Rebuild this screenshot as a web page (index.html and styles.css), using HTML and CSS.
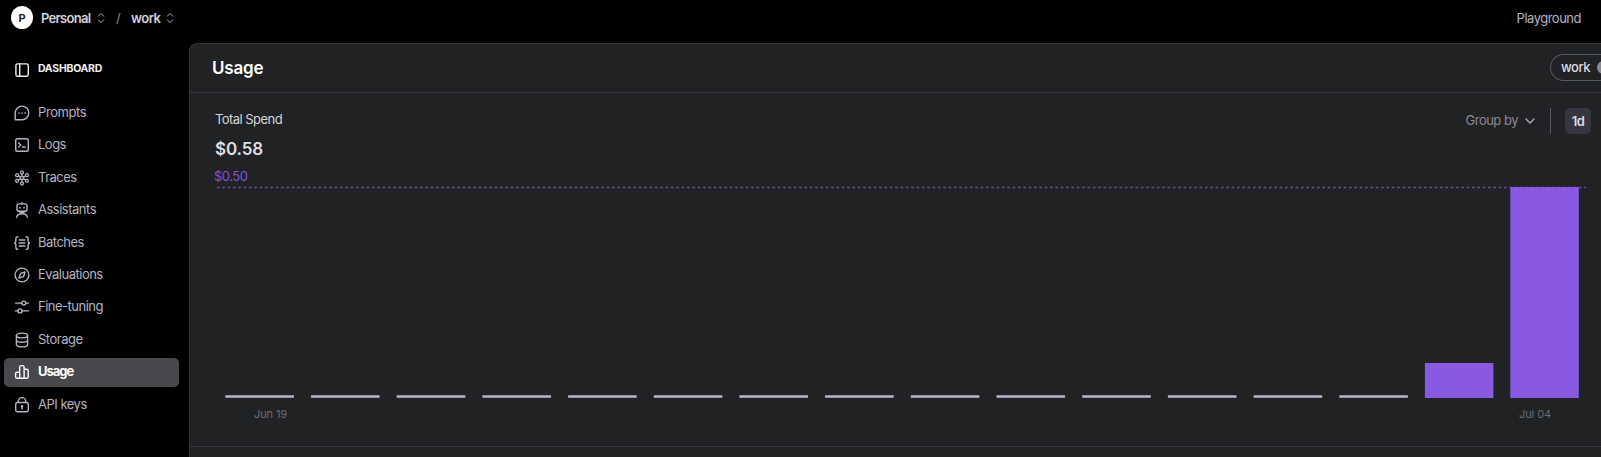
FILE: index.html
```html
<!DOCTYPE html>
<html lang="en">
<head>
<meta charset="utf-8">
<title>Usage</title>
<link rel="stylesheet" href="styles.css">
</head>
<body>
<header class="topbar">
  <span class="avatar">P</span>
  <span class="crumb personal">Personal</span>
  <svg class="updown" viewBox="0 0 8 12"><path d="M1.300 4.200 4 1.400l2.700 2.800M1.300 7.800 4 10.600l2.700-2.800"/></svg>
  <span class="slash">/</span>
  <span class="crumb work">work</span>
  <svg class="updown" viewBox="0 0 8 12"><path d="M1.300 4.200 4 1.400l2.700 2.800M1.300 7.800 4 10.600l2.700-2.800"/></svg>
  <span class="playground">Playground</span>
</header>
<div class="shell">
  <aside class="sidebar">
    <div class="heading">
      <svg class="icon" viewBox="0 0 16 16"><rect x="1.900" y="1.900" width="12.400" height="12.400" rx="1.700"/><path d="M5.700 2v12.200"/></svg>
      <span>DASHBOARD</span>
    </div>
    <nav class="nav">
      <a class="item prompts"><svg class="icon" viewBox="0 0 16 16"><path d="M1.200 14.700V8A6.800 6.800 0 1 1 8 14.700Z"/><path class="dots" d="M5 8h.01M8 8h.01M11 8h.01"/></svg><span>Prompts</span></a>
      <a class="item logs"><svg class="icon" viewBox="0 0 16 16"><rect x="1.700" y="1.700" width="12.600" height="12.600" rx="1.800"/><path d="m4.700 5.900 2 2-2 2M8.300 10h2.900"/></svg><span>Logs</span></a>
      <a class="item traces"><svg class="icon" viewBox="0 0 16 16"><circle cx="8" cy="8" r="1.700"/><circle cx="8" cy="2.400" r="1.500"/><circle cx="8" cy="13.600" r="1.500"/><circle cx="3.100" cy="5.200" r="1.500"/><circle cx="12.900" cy="5.200" r="1.500"/><circle cx="3.100" cy="10.800" r="1.500"/><circle cx="12.900" cy="10.800" r="1.500"/><path d="M8 4v2.400M8 9.600V12M4.400 6l2.200 1.200M9.400 8.800l2.200 1.200M11.600 6 9.400 7.200M6.600 8.800 4.400 10"/></svg><span>Traces</span></a>
      <a class="item assistants"><svg class="icon" viewBox="0 0 16 16"><rect x="3" y="1.900" width="10" height="7.400" rx="2"/><path d="M8 .5v1.300M2.700 15.200c.2-2 2-3.500 5.300-3.500s5.100 1.500 5.300 3.500M4.900 9.500c1.800 1.300 4.400 1.300 6.200 0"/><path class="dots" d="M6 5.700h.01M10 5.700h.01"/></svg><span>Assistants</span></a>
      <a class="item batches"><svg class="icon" viewBox="0 0 16 16"><path d="M3.800 1.700c-1.400 0-1.900.6-1.900 1.900v2.500c0 1-.4 1.500-1.300 1.900.9.400 1.300.9 1.300 1.900v2.500c0 1.300.5 1.900 1.900 1.900M12.200 1.700c1.400 0 1.900.6 1.900 1.900v2.500c0 1 .4 1.500 1.300 1.900-.9.400-1.300.9-1.300 1.900v2.500c0 1.300-.5 1.900-1.900 1.900M5.200 5h5.600M5.200 8h5.600M5.200 11h5.600"/></svg><span>Batches</span></a>
      <a class="item evaluations"><svg class="icon" viewBox="0 0 16 16"><circle cx="8" cy="8" r="6.900"/><path d="m6.600 6.300 4.400-1.300-1.500 4.700L5 11Z"/></svg><span>Evaluations</span></a>
      <a class="item finetuning"><svg class="icon" viewBox="0 0 16 16"><circle cx="9.800" cy="4.100" r="2"/><circle cx="6" cy="11.900" r="2"/><path d="M1.500 4.100h6.300M11.800 4.100h2.700M1.500 11.900H4M8 11.900h6.500"/></svg><span>Fine-tuning</span></a>
      <a class="item storage"><svg class="icon" viewBox="0 0 16 16"><ellipse cx="8" cy="3.500" rx="5.600" ry="2.400"/><path d="M2.400 3.500v9c0 1.400 2.500 2.400 5.600 2.400s5.600-1 5.600-2.400v-9M2.400 8c0 1.400 2.500 2.300 5.600 2.300s5.600-.9 5.600-2.300"/></svg><span>Storage</span></a>
      <a class="item usage active"><svg class="icon" viewBox="0 0 16 16"><path d="M5.700 14.300H3.200c-1 0-1.600-.6-1.600-1.600V9.800c0-1 .6-1.600 1.600-1.600h2.500M5.700 14.300V3.200c0-1 .6-1.600 1.600-1.600h1.200c1 0 1.600.6 1.600 1.600v11.100ZM10.100 5.300h2.500c1 0 1.600.6 1.600 1.600v5.800c0 1-.6 1.600-1.600 1.600h-2.500"/></svg><span>Usage</span></a>
      <a class="item keys"><svg class="icon" viewBox="0 0 16 16"><rect x="1.700" y="5.500" width="12.600" height="9.300" rx="1.700"/><path d="M4.300 5.400V4.300a3.700 3.700 0 0 1 7.400 0v1.100M8 10v2"/><circle class="solid" cx="8" cy="9.300" r="1.200"/></svg><span>API keys</span></a>
    </nav>
  </aside>
  <main class="panel">
    <div class="panel-head">
      <h1>Usage</h1>
      <div class="pill"><span>work</span><i></i></div>
    </div>
    <section class="spend">
      <div class="summary">
        <div>
          <div class="label">Total Spend</div>
          <div class="amount">$0.58</div>
        </div>
        <div class="controls">
          <span class="group">Group by</span>
          <svg class="chevron" viewBox="0 0 10 6"><path d="m1 1 4 4 4-4"/></svg>
          <span class="divider"></span>
          <span class="range">1d</span>
        </div>
      </div>
      <div class="limit">$0.50</div>
      <svg class="chart" viewBox="0 0 1412 214">
        <g class="empty">
          <path d="M36.300 211.500h68.600M122 211.500h68.600M207.700 211.500h68.600M293.400 211.500H362M379.100 211.500h68.600M464.800 211.500h68.600M550.400 211.500H619M636.100 211.500h68.600M721.800 211.500h68.600M807.500 211.500h68.600M893.200 211.500h68.600M978.900 211.500h68.600M1064.600 211.500h68.600M1150.300 211.500h68.600"/>
        </g>
        <rect class="bar" x="1235.900" y="178" width="68.500" height="35"/>
        <path class="threshold" d="M28 2.500h1369"/>
        <rect class="bar" x="1321.300" y="2" width="68.500" height="211"/>
      </svg>
      <div class="dates"><span>Jun 19</span><span>Jul 04</span></div>
    </section>
  </main>
</div>
</body>
</html>
```
FILE: styles.css
```css
* { box-sizing: border-box; }
body {
  margin: 0;
  width: 1601px;
  height: 457px;
  overflow: hidden;
  background: #000;
  color: #b5b4c0;
  font: 13px/16px Inter, "Liberation Sans", sans-serif;
  letter-spacing: -0.5px;
}
svg { display: block; flex: none; fill: none; stroke: currentColor; stroke-linecap: round; stroke-linejoin: round; }
.topbar { display: flex; align-items: center; height: 43px; padding: 0 20px 8px 11px; }
.avatar {
  display: grid; place-items: center; width: 22px; height: 23px; border-radius: 50%;
  background: #fff; color: #222; font-size: 11px; font-weight: 700; letter-spacing: 0;
}
.crumb { font-weight: 600; color: #d3d2dc; }
.personal { width: 56px; margin-left: 8px; letter-spacing: -0.7px; }
.work { width: 35px; margin-left: 11px; }
.updown { width: 8px; height: 12px; color: #a9a8b3; }
.slash { width: 4px; margin-left: 11px; color: #8e8d99; }
.playground { margin-left: auto; }
.shell { display: flex; height: 414px; }
.sidebar { width: 189px; flex: none; }
.icon { width: 16px; height: 16px; stroke-width: 1.4; }
.heading {
  display: flex; align-items: center; gap: 8px; height: 16px; margin: 19px 0 20.500px 14px;
  color: #f0f0f3; font-size: 10.500px; font-weight: 700; letter-spacing: -0.270px;
}
.heading span, .item span { position: relative; top: -1px; }
.nav { display: flex; flex-direction: column; gap: 3.400px; padding-left: 4px; }
.item { display: flex; align-items: center; gap: 8px; width: 175px; height: 29px; padding-left: 10px; border-radius: 5px; }
.prompts { letter-spacing: -0.400px; }
.active { background: #47474c; color: #fff; font-weight: 700; letter-spacing: -1px; }
.dots { stroke-width: 1.700; }
.traces .icon { stroke-width: 1.300; }
.solid { fill: currentColor; stroke: none; }
.panel { width: 1412px; height: 414px; flex: none; overflow: hidden; border-top: 1px solid #303135; border-left: 1px solid #303135; border-radius: 8px 0 0 0; background: #212223; }
.panel-head { display: flex; align-items: center; justify-content: space-between; height: 49px; padding-left: 22px; border-bottom: 1px solid #383944; }
h1 { margin: 0; color: #fff; font-size: 17px; font-weight: 600; line-height: 24px; letter-spacing: -0.200px; }
.pill { display: flex; align-items: center; flex: none; width: 51px; height: 27px; margin-bottom: 1px; overflow: hidden; padding-left: 10px; border: 1px solid #565765; border-right: 0; border-radius: 14px 0 0 14px; color: #dedde5; font-weight: 500; }
.pill span { width: 36px; flex: none; position: relative; top: -1px; }
.pill i { width: 13px; height: 13px; flex: none; border-radius: 50%; background: #898893; }
.spend { height: 354px; border-bottom: 1px solid #383944; }
.summary { display: flex; justify-content: space-between; height: 75px; padding: 18px 10px 0 25px; }
.label { color: #d4d3da; letter-spacing: -0.550px; }
.amount { margin-top: 11px; color: #dfdee4; font-size: 17px; font-weight: 600; line-height: 22px; letter-spacing: -0.100px; }
.controls { display: flex; align-items: center; height: 26px; margin-top: -3px; color: #898894; }
.group { position: relative; top: -1px; }
.chevron { width: 10px; height: 6px; margin-left: 7px; stroke-width: 1.300; color: #b0afb8; }
.divider { width: 1px; height: 26px; margin: 0 14px 0 15px; background: #565763; }
.range { display: grid; place-items: center; width: 26px; height: 26px; border-radius: 5px; background: #353641; color: #dcdbe3; font-weight: 600; }
.limit { height: 17px; padding-left: 24px; color: #8252d5; line-height: 17px; }
.chart { width: 1412px; height: 214px; margin-left: -1px; stroke-linecap: butt; }
.empty { stroke: #b8b5ce; stroke-width: 2.400; }
.bar { fill: #895ae1; stroke: none; }
.threshold { stroke: #684aa5; stroke-width: 1.500; stroke-dasharray: 2.670 2.670; }
.dates { display: flex; justify-content: space-between; margin-top: 7px; padding: 0 50px 0 64px; color: #6c6b76; font-size: 11px; line-height: 16px; letter-spacing: -0.100px; }
```
